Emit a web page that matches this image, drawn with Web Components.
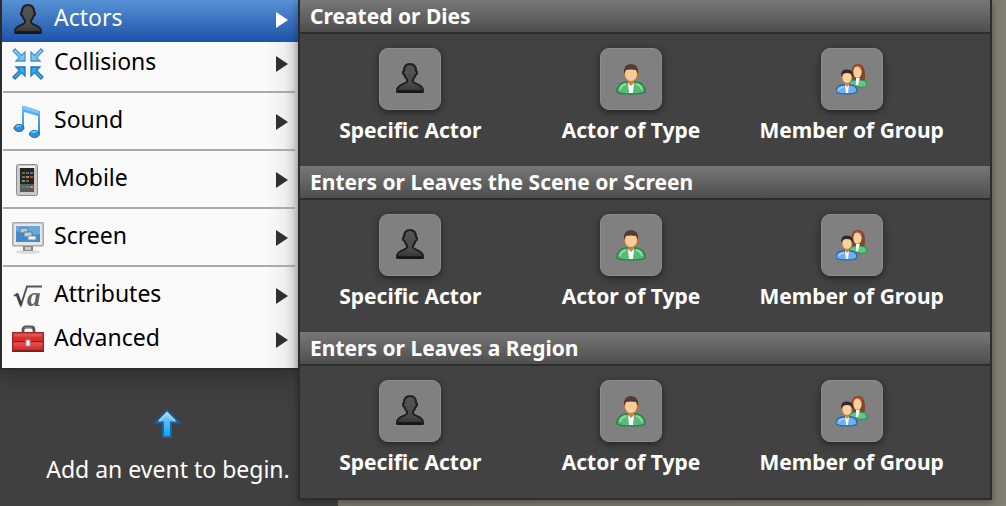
<!DOCTYPE html>
<html lang="en">
<head>
<meta charset="utf-8">
<title>Add Event</title>
<style>
  html { height: 100%; }
  body { margin: 0; min-height: 100%; background: #7c786c; font-family: "Noto Sans", "Open Sans", sans-serif; }
</style>
</head>
<body>
<event-screen>
  <event-hint slot="panel">Add an event to begin.</event-hint>
  <event-menu slot="menu">
    <menu-item icon="actor" active>Actors</menu-item>
    <menu-item icon="collide">Collisions</menu-item>
    <menu-rule></menu-rule>
    <menu-item icon="sound">Sound</menu-item>
    <menu-rule></menu-rule>
    <menu-item icon="mobile">Mobile</menu-item>
    <menu-rule></menu-rule>
    <menu-item icon="screen">Screen</menu-item>
    <menu-rule></menu-rule>
    <menu-item icon="root">Attributes</menu-item>
    <menu-item icon="toolbox">Advanced</menu-item>
  </event-menu>
  <event-flyout slot="flyout">
    <event-group heading="Created or Dies">
      <event-choice icon="actor">Specific Actor</event-choice>
      <event-choice icon="person">Actor of Type</event-choice>
      <event-choice icon="people">Member of Group</event-choice>
    </event-group>
    <event-group heading="Enters or Leaves the Scene or Screen">
      <event-choice icon="actor">Specific Actor</event-choice>
      <event-choice icon="person">Actor of Type</event-choice>
      <event-choice icon="people">Member of Group</event-choice>
    </event-group>
    <event-group heading="Enters or Leaves a Region">
      <event-choice icon="actor">Specific Actor</event-choice>
      <event-choice icon="person">Actor of Type</event-choice>
      <event-choice icon="people">Member of Group</event-choice>
    </event-group>
  </event-flyout>
</event-screen>

<script>
const ICONS = {
  actor: `<defs><linearGradient id="g" x2="0" y2="1"><stop stop-color="#565656"/><stop offset=".75" stop-color="#484848"/><stop offset="1" stop-color="#303030"/></linearGradient></defs>
    <path d="M16 1c-4 0-6 3-6 7-1.500 0-1.500 3.500.500 4 .5 2 1.500 3.500 2.500 4.500v2C12 21 3 21.500 3 27v2h26v-2c0-5.500-9-6-10-8.500v-2c1-1 2-2.500 2.500-4.500 2-.5 2-4 .5-4 0-4-2-7-6-7z" fill="url(#g)" stroke="#202020" stroke-width="2" stroke-linejoin="round"/>
    <path d="M4 28.500h24" stroke="#151515" stroke-width="2.500"/>`,
  collide: `<defs><linearGradient id="g" x2="0" y2="1"><stop stop-color="#a0dcf8"/><stop offset="1" stop-color="#6cc0ee"/></linearGradient><linearGradient id="h" x2="0" y2="1"><stop stop-color="#28a4ea"/><stop offset="1" stop-color="#58b8ee"/></linearGradient></defs>
    <g stroke="#4a94cc" stroke-width="1.300" fill="url(#g)"><path d="M1 3l2-2 6.500 6.500L13 4v9H4l3.500-3.500z"/><path d="M31 3l-2-2-6.500 6.500L19 4v9h9l-3.500-3.500z"/></g>
    <g stroke="#1e74b8" stroke-width="1.300" fill="url(#h)"><path d="M1 29l2 2 6.500-6.500L13 28v-9H4l3.500 3.500z"/><path d="M31 29l-2 2-6.500-6.500L19 28v-9h9l-3.500 3.500z"/></g>`,
  sound: `<defs><linearGradient id="g" x2="0" y2="1"><stop stop-color="#64baf6"/><stop offset="1" stop-color="#2e88e0"/></linearGradient></defs>
    <path d="M10 0h3l15 5v22h-2V10L12 6v17h-2z" fill="url(#g)"/><path d="M11 1.500l16 5" stroke="#88ccf8" stroke-width="2"/>
    <ellipse cx="7" cy="22" rx="5" ry="3.500" fill="#2a8ee0" stroke="#1e68ac"/><ellipse cx="22.500" cy="28" rx="5" ry="3.500" fill="#2a8ee0" stroke="#1e68ac"/>
    <path d="M4 21q2-2 5-1M19.500 27q2-2 5-1" stroke="#7ed0fa" stroke-width="1.500" fill="none"/>`,
  mobile: `<rect x="4.500" y=".5" width="21" height="31" rx="2" fill="#c8c8c8" stroke="#8c8c8c"/><path d="M7 3h16" stroke="#f0f0f0" stroke-width="2"/>
    <rect x="8" y="4" width="14" height="24" fill="#242424"/><path d="M8 20h14v8H8z" fill="#5a5a5a"/>
    <g stroke-width="1.700"><path d="M10 9h3M10 23h3" stroke="#48a848"/><path d="M14 9h3M18 13h3" stroke="#d85858"/><path d="M18 9h3M10 13h3M14 23h3" stroke="#6090e0"/><path d="M14 13h3M18 23h3" stroke="#e8b030"/><path d="M10 17h3" stroke="#b8a038"/><path d="M14 17h3" stroke="#777"/></g>`,
  screen: `<ellipse cx="16" cy="30" rx="12" ry="2" fill="#ddd"/><rect x=".8" y=".8" width="30.400" height="23" rx="1" fill="#e5e5e5" stroke="#aaa" stroke-width="1.600"/>
    <rect x="4" y="4" width="24" height="16" fill="#3f8cca"/><path d="M28 4v8Q17 14 4 9V4z" fill="#68aadb"/>
    <path d="M8 6h8v5H8z" fill="#b3c9d8" stroke="#517895"/><path d="M12 10h8v5h-8z" fill="#bfd0dc" stroke="#517895"/><path d="M16 14h8v4h-8z" fill="#eee" stroke="#80919d"/>
    <path d="M11 24h10v5H11z" fill="#888"/><path d="M13 25h6v3h-6z" fill="#ccc"/>`,
  root: `<path d="M2 16l3-2 4 11L15 6.500h15" fill="none" stroke="#555" stroke-width="2"/><path d="M5 14l4 11" stroke="#444" stroke-width="3"/><text x="15" y="26" font-family="Liberation Serif, serif" font-weight="bold" font-style="italic" font-size="27" fill="#606060">a</text>`,
  toolbox: `<defs><linearGradient id="g" x2="0" y2="1"><stop stop-color="#e87070"/><stop offset=".25" stop-color="#dc3434"/><stop offset=".5" stop-color="#ce2828"/><stop offset=".55" stop-color="#e65050"/><stop offset="1" stop-color="#cc2020"/></linearGradient></defs>
    <path d="M11 9V6q0-3 3-3h5q3 0 3 3v3" fill="none" stroke="#555" stroke-width="2.800"/><path d="M12.500 4h7" stroke="#aaa"/><rect x=".8" y="8.800" width="30.400" height="18.400" fill="url(#g)" stroke="#a82828" stroke-width="1.600"/>
    <path d="M1 17.500h30" stroke="#8e2222"/><path d="M0 27h32" stroke="#822020" stroke-width="2"/><path d="M14 16h4v6h-4z" fill="#eee" stroke="#999"/>`,
  person: `<path d="M2 29q0-9 9-10h10q9 1 9 10-2 2-14 2T2 29z" fill="#58b978" stroke="#268348" stroke-width="1.500"/><path d="M5 27q1-5 6-6M27 27q-1-5-6-6" stroke="#8edaa4" stroke-width="2" fill="none"/>
    <path d="M13 20h6l-1 10h-4z" fill="#fff"/><path d="M13 15h6v5l-3 3-3-3z" fill="#c98346"/>
    <ellipse cx="9" cy="11.500" rx="1.500" ry="2.500" fill="#b8702e"/><ellipse cx="23" cy="11.500" rx="1.500" ry="2.500" fill="#b8702e"/>
    <ellipse cx="16" cy="11" rx="6.500" ry="7.500" fill="#f5cd9b" stroke="#b97b3e"/><path d="M9 11Q8 1 16 1t7 10l-2-4q-5-1-10 0z" fill="#543a32"/>`,
  people: `<path d="M12 24q1-7 7-7h6q6 0 6 6-3 2-10 1z" fill="#64c584" stroke="#31965a" stroke-width="1.300"/><path d="M15 16Q14 1 22 1t7 15q-2 2-4 1h-8z" fill="#854425"/><ellipse cx="21.500" cy="9" rx="4.200" ry="6" fill="#f8d0a0"/><path d="M17 7q2-5 6-3l3 4V4l-4-2-5 2z" fill="#b25c2d"/><path d="M20 15h4l-2 7h-2z" fill="#fff"/>
    <path d="M0 29q0-7 7-7h8q6 0 6 7-3 2-11 2T0 29z" fill="#72aee8" stroke="#2868ac" stroke-width="1.300"/><path d="M3 27q1-3 5-3" stroke="#acd4fa" stroke-width="1.500" fill="none"/><path d="M9 22h4l-1 8h-2z" fill="#fff"/><path d="M9 19h4v3l-2 2-2-2z" fill="#cf8c4d"/><ellipse cx="11" cy="14.500" rx="5" ry="6" fill="#f8d2a0" stroke="#b87b40"/><path d="M5.500 14Q4 6 11 6.500q7 0 5.500 7.500L15 11q-4-2-8 0z" fill="#322a29"/>`
};

const define = (name, html, ready) => {
  const template = document.createElement('template');
  template.innerHTML = html;
  customElements.define(name, class extends HTMLElement {
    constructor() {
      super();
      this.attachShadow({ mode: 'open' }).append(template.content.cloneNode(true));
    }
    connectedCallback() { if (ready) ready(this, this.shadowRoot); }
  });
};

customElements.define('pic-icon', class extends HTMLElement {
  static observedAttributes = ['name'];
  constructor() {
    super();
    this.attachShadow({ mode: 'open' }).innerHTML = `
      <style>:host { display: block; flex: none; width: 32px; height: 32px; } svg { display: block; }</style>
      <svg width="32" height="32" viewBox="0 0 32 32" aria-hidden="true"></svg>`;
  }
  attributeChangedCallback(attr, before, value) {
    this.shadowRoot.querySelector('svg').innerHTML = ICONS[value] || '';
  }
});

define('event-screen', `
  <style>
    :host { display: grid; grid-template-columns: 298px 40px 1fr; min-height: 100vh; overflow: hidden;
      background: linear-gradient(90deg, #7a766b, #7d796c 98%, #858074); }
    aside { grid-area: 1 / 1 / 2 / 3; background: #404040; }
    .menu { grid-area: 1 / 1 / 2 / 2; align-self: start; }
    .flyout { grid-area: 1 / 2 / 2 / 4; align-self: start; margin-right: 14px; z-index: 1; }
  </style>
  <aside><slot name="panel"></slot></aside>
  <nav class="menu"><slot name="menu"></slot></nav>
  <section class="flyout"><slot name="flyout"></slot></section>`);

define('event-hint', `
  <style>
    :host { display: flex; flex-direction: column; align-items: center; gap: 16px; padding: 408px 2px 0 0; color: #fff; }
    svg { display: block; }
    p { margin: 0; font-size: 23px; line-height: 30px; white-space: nowrap; }
  </style>
  <svg width="28" height="30" viewBox="0 0 28 30" aria-hidden="true">
    <defs><linearGradient id="g" x2="0" y2="1"><stop stop-color="#a4dcff"/><stop offset=".45" stop-color="#58b4f2"/><stop offset="1" stop-color="#00aaff"/></linearGradient></defs>
    <path d="M13 3L2 14.500h7V29h8V14.500h8z" fill="url(#g)" stroke="#1b64a3" stroke-width="2"/>
    <path d="M5 13l8-8.500 8 8.500" fill="none" stroke="#a0dcff" stroke-width="1.500"/>
  </svg>
  <p><slot></slot></p>`);

define('event-menu', `
  <style>
    :host { display: block; box-sizing: border-box; margin-top: -2px; padding-bottom: 6px; border-left: 2px solid #2b2b2b; border-bottom: 2px solid #2b2b2b;
      background: linear-gradient(90deg, transparent calc(100% - 32px), rgba(0,0,0,.04) calc(100% - 14px), rgba(0,0,0,.16)), #fafafa;
      box-shadow: 0 8px 24px rgba(0,0,0,.3); }
  </style>
  <slot></slot>`);

define('menu-rule', `
  <style>:host { display: block; padding: 5px 3px 7px 1px; } hr { margin: 0; border: 0; height: 2px; background: #aaa; }</style>
  <hr>`);

define('menu-item', `
  <style>
    :host { display: block; color: #000; --arrow: #303030; }
    :host([active]) { color: #fff; --arrow: #fff; background: linear-gradient(#5b95d7, #1c52a8); }
    button { display: flex; align-items: center; gap: 10px; box-sizing: border-box; width: 100%; height: 44px; margin: 0; padding: 0 10px;
      border: 0; background: none; color: inherit; font: inherit; font-size: 23px; text-align: left; }
    span { flex: 1; line-height: 32px; padding-bottom: 6px; }
    svg { flex: none; }
  </style>
  <button type="button"><pic-icon></pic-icon><span><slot></slot></span>
    <svg width="12" height="16" viewBox="0 0 12 16" aria-hidden="true"><path d="M0 0l12 8-12 8z" fill="var(--arrow)"/></svg></button>`,
  (el, root) => root.querySelector('pic-icon').setAttribute('name', el.getAttribute('icon')));

define('event-flyout', `
  <style>
    :host { display: block; border: 2px solid #2d2d2d; border-top: 0; background: #424242; box-shadow: 0 2px 8px rgba(0,0,0,.35); }
  </style>
  <slot></slot>`);

define('event-group', `
  <style>
    :host { display: block; }
    h2 { margin: 0; padding: 0 10px; color: #fff; font-size: 21px; line-height: 32px; font-weight: 700; border-bottom: 2px solid #2d2d2d;
      background: linear-gradient(#777, #4e4e4e); }
    div { display: grid; grid-template-columns: repeat(3, 1fr); height: 132px; padding-right: 28px; box-sizing: border-box; }
  </style>
  <h2></h2><div><slot></slot></div>`,
  (el, root) => { root.querySelector('h2').textContent = el.getAttribute('heading'); });

define('event-choice', `
  <style>
    :host { display: block; }
    button { display: flex; flex-direction: column; align-items: center; gap: 6px; width: 100%; margin: 0; padding: 14px 0 0;
      border: 0; background: none; color: #fff; font: inherit; font-size: 21px; font-weight: 700; line-height: 28px; white-space: nowrap; }
    .tile { display: grid; place-items: center; box-sizing: border-box; width: 62px; height: 62px; border: 1px solid #8c8c8c; border-radius: 9px;
      background: #808080; box-shadow: 0 2px 7px rgba(0,0,0,.5); }
  </style>
  <button type="button"><span class="tile"><pic-icon></pic-icon></span><span><slot></slot></span></button>`,
  (el, root) => root.querySelector('pic-icon').setAttribute('name', el.getAttribute('icon')));
</script>
</body>
</html>
